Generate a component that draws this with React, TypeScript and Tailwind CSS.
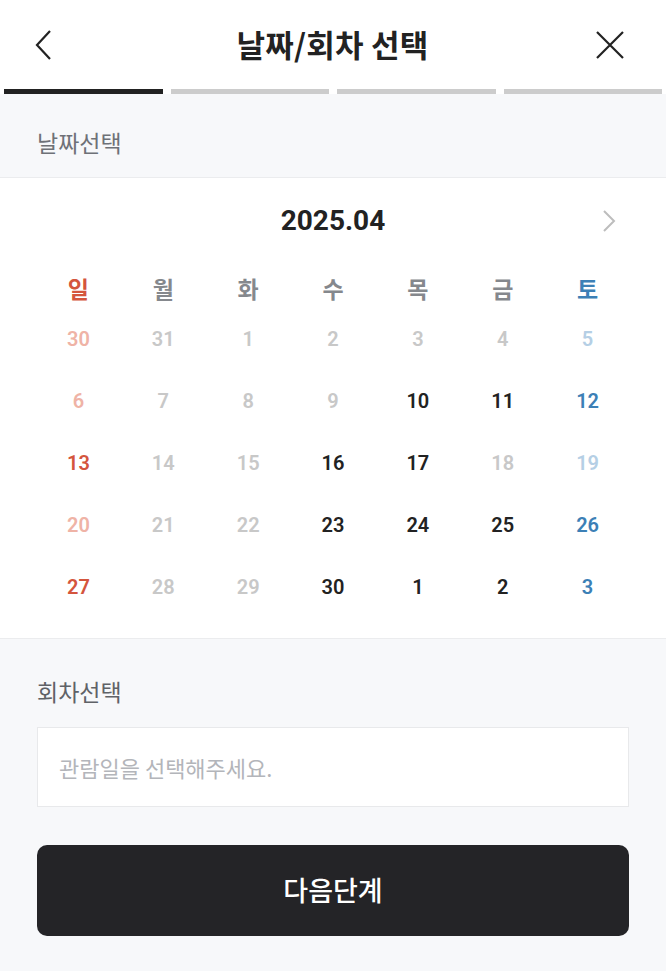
const FONT = { fontFamily: '"Noto Sans CJK KR", "Noto Sans", sans-serif' }
const NUM = { fontFamily: 'Roboto, "Noto Sans CJK KR", sans-serif' }

type Tone = 'sun' | 'sunOff' | 'sat' | 'satOff' | 'on' | 'off'

const toneClass: Record<Tone, string> = {
  sun: 'text-[#d4553d]',
  sunOff: 'text-[#efb3a6]',
  sat: 'text-[#3c80b6]',
  satOff: 'text-[#b5cfe5]',
  on: 'text-[#222222]',
  off: 'text-[#c8c8c8]',
}

const weeks: [string, Tone][][] = [
  [['30', 'sunOff'], ['31', 'off'], ['1', 'off'], ['2', 'off'], ['3', 'off'], ['4', 'off'], ['5', 'satOff']],
  [['6', 'sunOff'], ['7', 'off'], ['8', 'off'], ['9', 'off'], ['10', 'on'], ['11', 'on'], ['12', 'sat']],
  [['13', 'sun'], ['14', 'off'], ['15', 'off'], ['16', 'on'], ['17', 'on'], ['18', 'off'], ['19', 'satOff']],
  [['20', 'sunOff'], ['21', 'off'], ['22', 'off'], ['23', 'on'], ['24', 'on'], ['25', 'on'], ['26', 'sat']],
  [['27', 'sun'], ['28', 'off'], ['29', 'off'], ['30', 'on'], ['1', 'on'], ['2', 'on'], ['3', 'sat']],
]

const days = ['일', '월', '화', '수', '목', '금', '토']

export default function App() {
  return (
    <main className="flex min-h-[971px] w-[666px] flex-col bg-[#f7f8fa]" style={FONT}>
      {/* header */}
      <header className="grid h-[89px] grid-cols-[1fr_auto_1fr] items-center bg-white pl-[34px] pr-[41px]">
        <svg width="20" height="32" viewBox="0 0 20 32" fill="none" stroke="#222" strokeWidth="2.2">
          <path d="M16 2 3 16l13 14" />
        </svg>
        <h1 className="pl-[6px] text-[31px] font-bold tracking-[0.2px] text-[#222]">날짜/회차 선택</h1>
        <svg className="justify-self-end" width="30" height="30" viewBox="0 0 30 30" fill="none" stroke="#222" strokeWidth="2.2">
          <path d="M2 2l26 26M28 2 2 28" />
        </svg>
      </header>

      <div className="flex h-[5px] gap-[8px] bg-white px-[4px]">
        <div className="flex-1 bg-[#222]" />
        <div className="flex-1 bg-[#cccccc]" />
        <div className="flex-1 bg-[#cccccc]" />
        <div className="flex-1 bg-[#cccccc]" />
      </div>

      <div className="flex h-[83px] items-center px-[37px] pt-[13px]">
        <span className="text-[23px] text-[#6e7177]">날짜선택</span>
      </div>

      {/* calendar */}
      <section className="border-y border-[#ebecee] bg-white px-[36px] pt-[22px] pb-[20px]">
        <div className="relative flex h-[42px] items-center justify-center">
          <span className="text-[28px] font-bold text-[#222]" style={NUM}>2025.04</span>
          <svg className="absolute right-[14px]" width="14" height="22" viewBox="0 0 14 22" fill="none" stroke="#bdbdbd" strokeWidth="2">
            <path d="M2 1l10 10L2 21" />
          </svg>
        </div>
        <div className="mt-[26px] grid h-[40px] grid-cols-7 items-center text-center text-[23px] font-bold">
          {days.map((d, i) => (
            <span key={d} className={i === 0 ? 'text-[#d4553d]' : i === 6 ? 'text-[#3c80b6]' : 'text-[#85888d]'}>
              {d}
            </span>
          ))}
        </div>
        {weeks.map((w, wi) => (
          <div key={wi} className="grid h-[62px] grid-cols-7 items-center text-center text-[20px] font-semibold" style={NUM}>
            {w.map(([n, t], i) => (
              <span key={i} className={toneClass[t]}>
                {n}
              </span>
            ))}
          </div>
        ))}
      </section>

      {/* session */}
      <div className="flex flex-col px-[37px]">
        <div className="flex h-[88px] items-end pb-[19px]">
          <span className="text-[23px] text-[#5f6267]">회차선택</span>
        </div>
        <div className="flex h-[80px] w-[592px] items-center border border-[#e8e9eb] bg-white px-[21px]">
          <span className="text-[22px] text-[#b3b5ba]">관람일을 선택해주세요.</span>
        </div>
        <button className="mt-[38px] flex h-[91px] w-[592px] items-center justify-center rounded-[10px] bg-[#242427] text-[27px] font-medium text-white">
          다음단계
        </button>
      </div>
    </main>
  )
}
